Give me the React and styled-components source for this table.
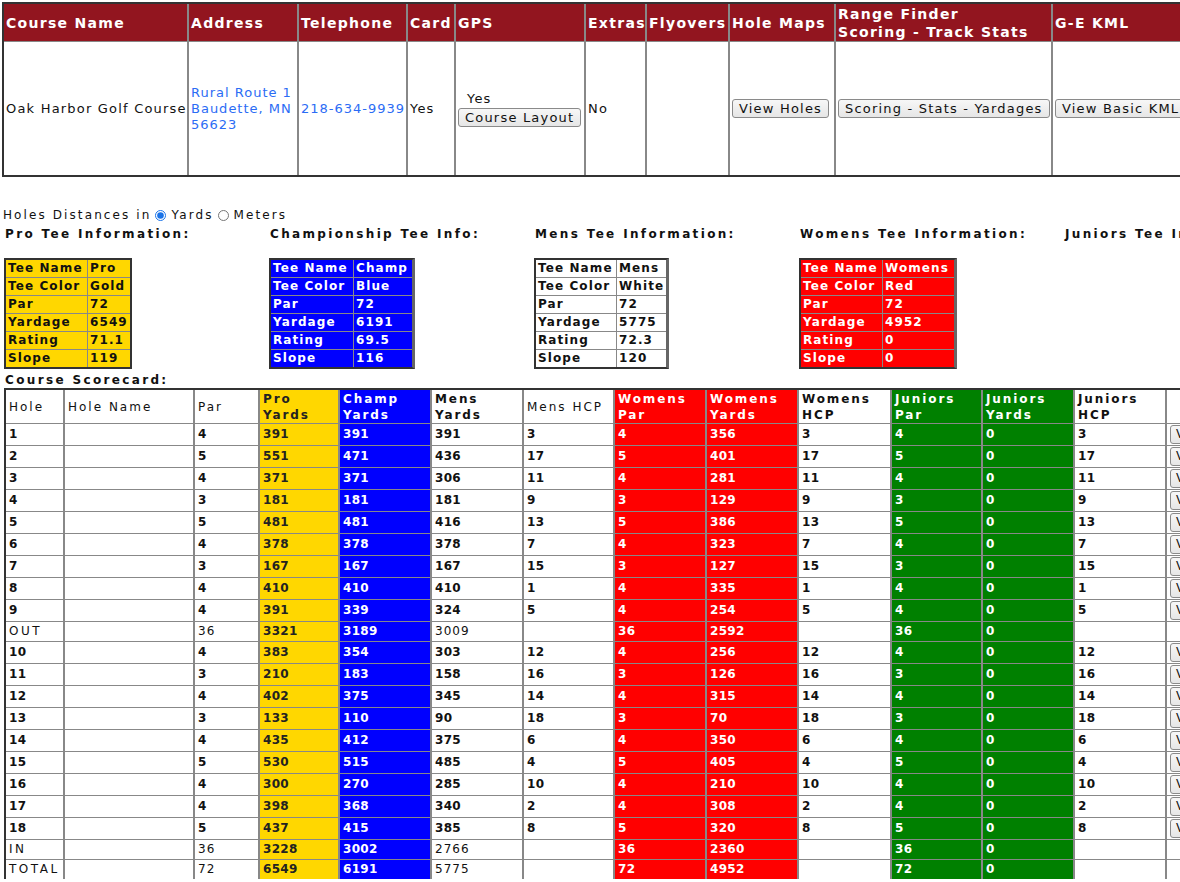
import React from "react";
import styled, { createGlobalStyle } from "styled-components";

const GlobalStyle = createGlobalStyle`
  html, body {
    margin: 0;
    padding: 0;
    overflow: hidden;
    background: #fff;
  }
  body {
    font-family: "DejaVu Sans", Verdana, sans-serif;
    color: #111;
  }
  *, *::before, *::after {
    box-sizing: border-box;
  }
`;

const Page = styled.div`
  padding: 2px 0 0 2px;
`;

/* ---------- course info table ---------- */

const InfoTable = styled.table`
  border-collapse: separate;
  border-spacing: 0;
  border: 2px solid #333;
  table-layout: fixed;
  width: 1261px;
`;

const InfoHead = styled.th`
  width: ${(p) => p.$w}px;
  height: 37px;
  padding: 0 2px;
  background: #92151f;
  color: #fff;
  font-size: 14px;
  font-weight: bold;
  letter-spacing: 1.3px;
  line-height: 18px;
  text-align: left;
  white-space: nowrap;
  border-left: 2px solid #888;
  &:first-child {
    border-left: 0;
  }
`;

const InfoCell = styled.td`
  height: 134px;
  padding: 0 2px;
  font-size: 13px;
  letter-spacing: ${(p) => (p.$tight ? 1 : 1.2)}px;
  line-height: 16px;
  vertical-align: middle;
  white-space: nowrap;
  border-left: 2px solid #888;
  border-top: 1px solid #888;
  &:first-child {
    border-left: 0;
  }
`;

const Link = styled.a`
  color: #2b6cf5;
  text-decoration: none;
`;

const GpsYes = styled.div`
  padding-left: 9px;
  line-height: 15px;
  margin-bottom: 2px;
`;

const Button = styled.button`
  display: ${(p) => (p.$block ? "block" : "inline-block")};
  height: 19px;
  padding: 0 6px;
  margin: 0;
  border: 1px solid #8a8a8a;
  border-radius: 3px;
  background: linear-gradient(#f7f7f7, #e6e6e6);
  color: #111;
  font-family: "DejaVu Sans", Verdana, sans-serif;
  font-size: 13px;
  letter-spacing: 1.2px;
  line-height: 17px;
  white-space: nowrap;
`;

/* ---------- tee info ---------- */

const Lower = styled.div`
  padding-left: 2px;
`;

const UnitsLine = styled.div`
  display: flex;
  align-items: center;
  margin: 30px 0 0 -1px;
  font-size: 12px;
  letter-spacing: 2.1px;
  line-height: 16px;
  white-space: nowrap;
`;

const Radio = styled.input`
  width: 11px;
  height: 11px;
  margin: 0 5px 0 4px;
  accent-color: #1a73e8;
`;

const TeeRow = styled.div`
  display: flex;
  margin-top: 3px;
`;

const TeeBlock = styled.div`
  flex: 0 0 265px;
`;

const TeeTitle = styled.div`
  padding-left: 1px;
  margin-bottom: 16px;
  font-size: 12px;
  font-weight: bold;
  letter-spacing: 2.35px;
  line-height: 16px;
  white-space: nowrap;
`;

const TeeTable = styled.table`
  border-collapse: separate;
  border-spacing: 0;
  table-layout: fixed;
  border: 2px solid #333;
  border-right: ${(p) => (p.$raised ? "3px solid #666" : "2px solid #333")};
  background: ${(p) => p.$bg};
  color: ${(p) => p.$fg};
  font-size: 12px;
  font-weight: bold;
  letter-spacing: 1.1px;
`;

const TeeCell = styled.td`
  width: ${(p) => p.$w}px;
  height: 17px;
  padding: 1px 2px;
  line-height: 15px;
  white-space: nowrap;
  border-left: 1px solid #888;
  border-top: 1px solid #888;
  &:first-child {
    border-left: 0;
  }
  tr:first-child > & {
    border-top: 0;
  }
`;

/* ---------- scorecard ---------- */

const ScoreTitle = styled.div`
  margin-top: 3px;
  padding-left: 1px;
  font-size: 12px;
  font-weight: bold;
  letter-spacing: 2.35px;
  line-height: 16px;
`;

const ScoreTable = styled.table`
  border-collapse: separate;
  border-spacing: 0;
  table-layout: fixed;
  width: 1241px;
  border-top: 2px solid #333;
  border-left: 2px solid #333;
  font-size: 12px;
`;

const ScoreHead = styled.th`
  width: ${(p) => p.$w}px;
  height: 33px;
  padding: 0 3px;
  background: ${(p) => p.$bg || "#fff"};
  color: ${(p) => p.$fg || "#111"};
  font-weight: ${(p) => (p.$bold ? "bold" : "normal")};
  letter-spacing: ${(p) => (p.$bold ? 1.9 : 2)}px;
  line-height: 16px;
  text-align: left;
  vertical-align: middle;
  white-space: nowrap;
  border-left: 2px solid #888;
  &:first-child {
    border-left: 0;
  }
`;

const ScoreCell = styled.td`
  height: ${(p) => (p.$total ? 20 : 22)}px;
  padding: ${(p) => (p.$btn ? "1px 3px" : "2px 3px")};
  background: ${(p) => p.$bg || "#fff"};
  color: ${(p) => p.$fg || "#111"};
  font-weight: ${(p) => (p.$bold ? "bold" : "normal")};
  letter-spacing: ${(p) => (p.$wide ? 2.5 : p.$bold ? 0.3 : 1)}px;
  line-height: 15px;
  vertical-align: middle;
  white-space: nowrap;
  border-left: 2px solid #888;
  border-top: 1px solid #888;
  &:first-child {
    border-left: 0;
  }
`;

const RowButton = styled(Button)`
  font-size: 12px;
  letter-spacing: 1px;
  padding: 0 5px;
`;

const GOLD = "#ffd700";
const BLUE = "#0000ff";
const RED = "#ff0000";
const GREEN = "#008000";

const infoCols = [
  ["Course Name", 183],
  ["Address", 110],
  ["Telephone", 109],
  ["Card", 48],
  ["GPS", 130],
  ["Extras", 61],
  ["Flyovers", 83],
  ["Hole Maps", 106],
  [["Range Finder", "Scoring - Track Stats"], 217],
  ["G-E KML", 214],
];

const tees = [
  {
    title: "Pro Tee Information:",
    bg: GOLD,
    fg: "#111",
    widths: [81, 41],
    rows: [["Tee Name", "Pro"], ["Tee Color", "Gold"], ["Par", "72"], ["Yardage", "6549"], ["Rating", "71.1"], ["Slope", "119"]],
  },
  {
    title: "Championship Tee Info:",
    bg: BLUE,
    fg: "#fff",
    raised: true,
    widths: [82, 59],
    rows: [["Tee Name", "Champ"], ["Tee Color", "Blue"], ["Par", "72"], ["Yardage", "6191"], ["Rating", "69.5"], ["Slope", "116"]],
  },
  {
    title: "Mens Tee Information:",
    bg: "#fff",
    fg: "#111",
    raised: true,
    widths: [80, 49],
    rows: [["Tee Name", "Mens"], ["Tee Color", "White"], ["Par", "72"], ["Yardage", "5775"], ["Rating", "72.3"], ["Slope", "120"]],
  },
  {
    title: "Womens Tee Information:",
    bg: RED,
    fg: "#fff",
    raised: true,
    widths: [81, 72],
    rows: [["Tee Name", "Womens"], ["Tee Color", "Red"], ["Par", "72"], ["Yardage", "4952"], ["Rating", "0"], ["Slope", "0"]],
  },
  { title: "Juniors Tee Information:" },
];

const scoreCols = [
  { label: ["Hole"], w: 57 },
  { label: ["Hole Name"], w: 130 },
  { label: ["Par"], w: 65 },
  { label: ["Pro", "Yards"], w: 80, bg: GOLD, fg: "#222", bold: true },
  { label: ["Champ", "Yards"], w: 92, bg: BLUE, fg: "#fff", bold: true },
  { label: ["Mens", "Yards"], w: 92, bold: true },
  { label: ["Mens HCP"], w: 91 },
  { label: ["Womens", "Par"], w: 92, bg: RED, fg: "#fff", bold: true },
  { label: ["Womens", "Yards"], w: 92, bg: RED, fg: "#fff", bold: true },
  { label: ["Womens", "HCP"], w: 93, bold: true },
  { label: ["Juniors", "Par"], w: 91, bg: GREEN, fg: "#fff", bold: true },
  { label: ["Juniors", "Yards"], w: 92, bg: GREEN, fg: "#fff", bold: true },
  { label: ["Juniors", "HCP"], w: 92, bold: true },
  { label: [""], w: 80 },
];

// hole, par, pro, champ, mens, mens hcp, w par, w yards, w hcp, j par, j yards, j hcp
const holes = [
  ["1", 4, 391, 391, 391, 3, 4, 356, 3, 4, 0, 3],
  ["2", 5, 551, 471, 436, 17, 5, 401, 17, 5, 0, 17],
  ["3", 4, 371, 371, 306, 11, 4, 281, 11, 4, 0, 11],
  ["4", 3, 181, 181, 181, 9, 3, 129, 9, 3, 0, 9],
  ["5", 5, 481, 481, 416, 13, 5, 386, 13, 5, 0, 13],
  ["6", 4, 378, 378, 378, 7, 4, 323, 7, 4, 0, 7],
  ["7", 3, 167, 167, 167, 15, 3, 127, 15, 3, 0, 15],
  ["8", 4, 410, 410, 410, 1, 4, 335, 1, 4, 0, 1],
  ["9", 4, 391, 339, 324, 5, 4, 254, 5, 4, 0, 5],
  ["OUT", 36, 3321, 3189, 3009, "", 36, 2592, "", 36, 0, ""],
  ["10", 4, 383, 354, 303, 12, 4, 256, 12, 4, 0, 12],
  ["11", 3, 210, 183, 158, 16, 3, 126, 16, 3, 0, 16],
  ["12", 4, 402, 375, 345, 14, 4, 315, 14, 4, 0, 14],
  ["13", 3, 133, 110, 90, 18, 3, 70, 18, 3, 0, 18],
  ["14", 4, 435, 412, 375, 6, 4, 350, 6, 4, 0, 6],
  ["15", 5, 530, 515, 485, 4, 5, 405, 4, 5, 0, 4],
  ["16", 4, 300, 270, 285, 10, 4, 210, 10, 4, 0, 10],
  ["17", 4, 398, 368, 340, 2, 4, 308, 2, 4, 0, 2],
  ["18", 5, 437, 415, 385, 8, 5, 320, 8, 5, 0, 8],
  ["IN", 36, 3228, 3002, 2766, "", 36, 2360, "", 36, 0, ""],
  ["TOTAL", 72, 6549, 6191, 5775, "", 72, 4952, "", 72, 0, ""],
];

function CourseInfo() {
  return (
    <InfoTable>
      <thead>
        <tr>
          {infoCols.map(([label, w], i) => (
            <InfoHead key={i} $w={w}>
              {Array.isArray(label) ? (
                <>
                  {label[0]}
                  <br />
                  {label[1]}
                </>
              ) : (
                label
              )}
            </InfoHead>
          ))}
        </tr>
      </thead>
      <tbody>
        <tr>
          <InfoCell>Oak Harbor Golf Course</InfoCell>
          <InfoCell $tight>
            <Link href="#">
              Rural Route 1<br />
              Baudette, MN
              <br />
              56623
            </Link>
          </InfoCell>
          <InfoCell $tight>
            <Link href="#">218-634-9939</Link>
          </InfoCell>
          <InfoCell>Yes</InfoCell>
          <InfoCell>
            <GpsYes>Yes</GpsYes>
            <Button $block>Course Layout</Button>
          </InfoCell>
          <InfoCell>No</InfoCell>
          <InfoCell />
          <InfoCell>
            <Button>View Holes</Button>
          </InfoCell>
          <InfoCell>
            <Button>Scoring - Stats - Yardages</Button>
          </InfoCell>
          <InfoCell>
            <Button>View Basic KML</Button>
          </InfoCell>
        </tr>
      </tbody>
    </InfoTable>
  );
}

function TeeInfo() {
  return (
    <TeeRow>
      {tees.map((tee) => (
        <TeeBlock key={tee.title}>
          <TeeTitle>{tee.title}</TeeTitle>
          {tee.rows && (
            <TeeTable $bg={tee.bg} $fg={tee.fg} $raised={tee.raised}>
              <tbody>
                {tee.rows.map(([k, v]) => (
                  <tr key={k}>
                    <TeeCell $w={tee.widths[0]}>{k}</TeeCell>
                    <TeeCell $w={tee.widths[1]}>{v}</TeeCell>
                  </tr>
                ))}
              </tbody>
            </TeeTable>
          )}
        </TeeBlock>
      ))}
    </TeeRow>
  );
}

function Scorecard() {
  return (
    <ScoreTable>
      <thead>
        <tr>
          {scoreCols.map((c, i) => (
            <ScoreHead key={i} $w={c.w} $bg={c.bg} $fg={c.fg} $bold={c.bold}>
              {c.label[0]}
              {c.label[1] && (
                <>
                  <br />
                  {c.label[1]}
                </>
              )}
            </ScoreHead>
          ))}
        </tr>
      </thead>
      <tbody>
        {holes.map((row) => {
          const total = isNaN(Number(row[0]));
          const values = [row[0], "", ...row.slice(1)];
          return (
            <tr key={row[0]}>
              {values.map((v, i) => {
                const col = scoreCols[i];
                return (
                  <ScoreCell
                    key={i}
                    $total={total}
                    $bg={col.bg}
                    $fg={col.fg}
                    $bold={!total || !!col.bg}
                    $wide={total && i === 0}
                  >
                    {v}
                  </ScoreCell>
                );
              })}
              <ScoreCell $total={total} $btn={!total}>
                {!total && <RowButton>View Hole</RowButton>}
              </ScoreCell>
            </tr>
          );
        })}
      </tbody>
    </ScoreTable>
  );
}

export default function App() {
  return (
    <Page>
      <GlobalStyle />
      <CourseInfo />
      <Lower>
        <UnitsLine>
          Holes Distances in
          <Radio type="radio" name="units" defaultChecked />
          Yards
          <Radio type="radio" name="units" />
          Meters
        </UnitsLine>
        <TeeInfo />
        <ScoreTitle>Course Scorecard:</ScoreTitle>
        <Scorecard />
      </Lower>
    </Page>
  );
}
